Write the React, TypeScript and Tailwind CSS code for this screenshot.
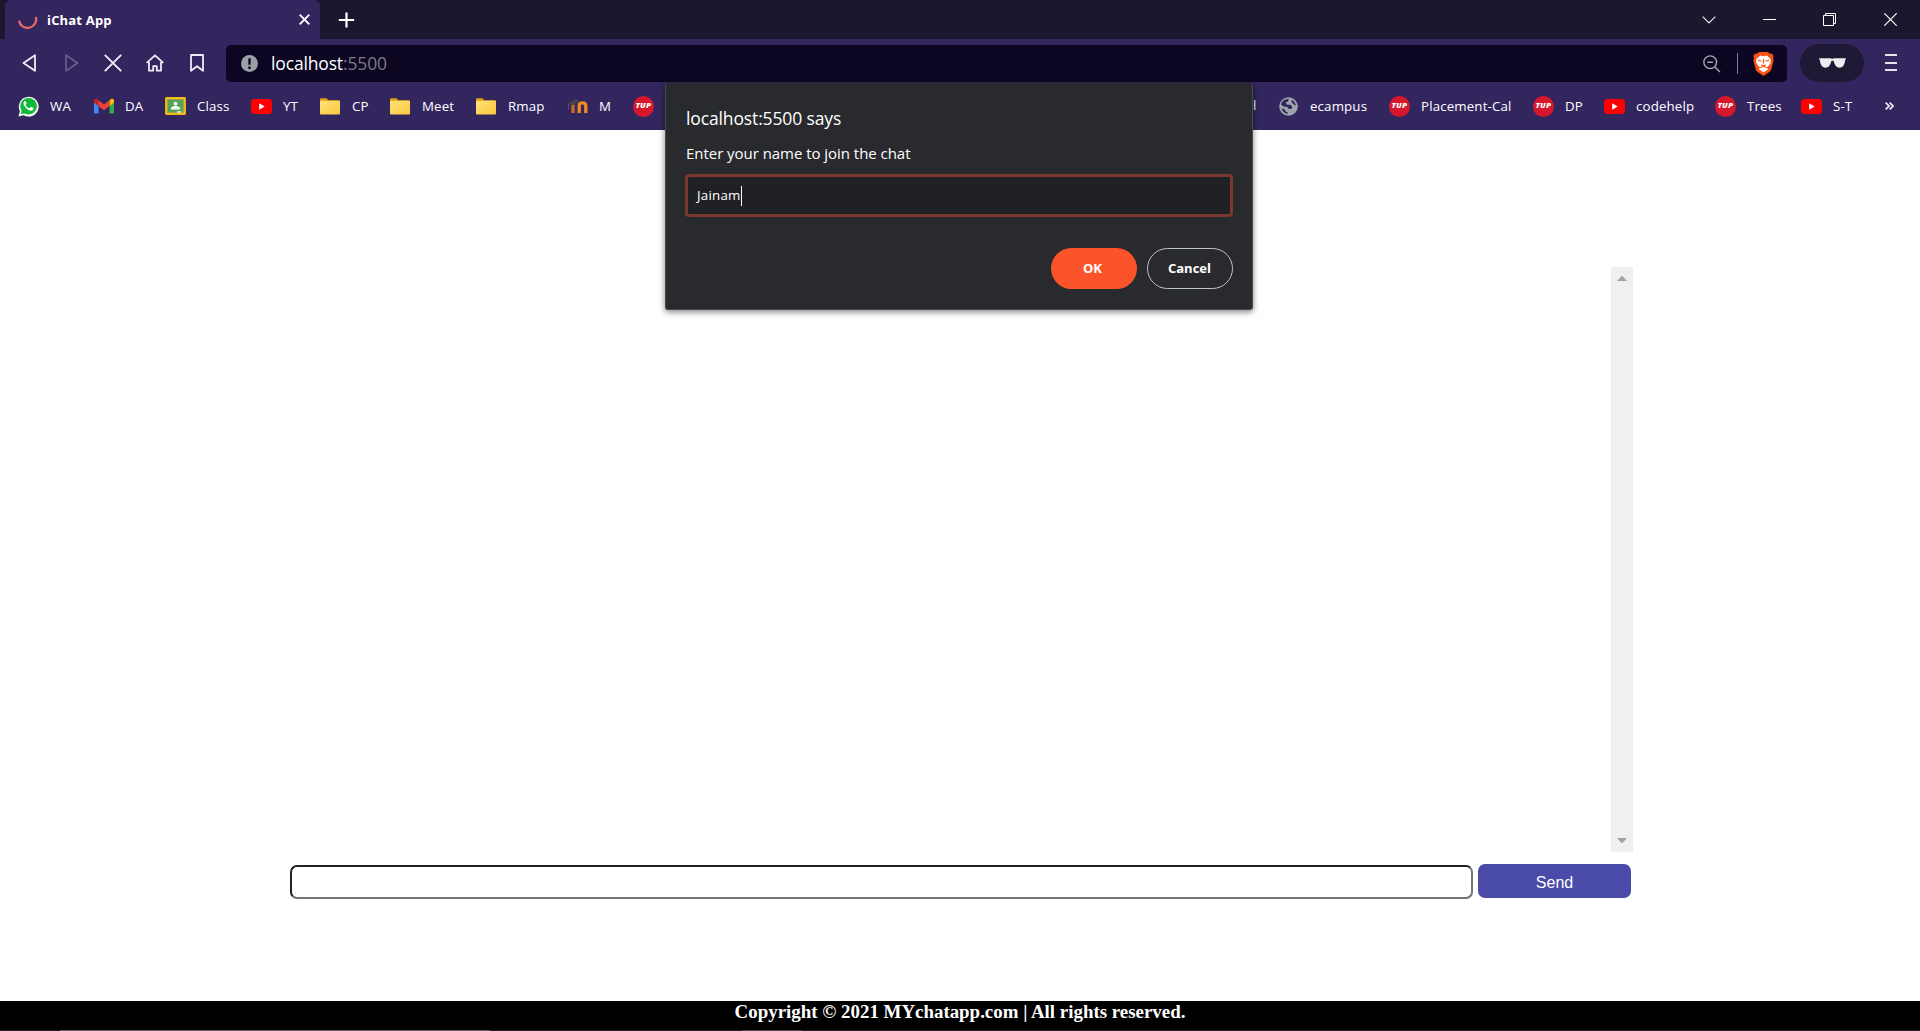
import React from "react";

const ui = "font-['Open_Sans','Noto_Sans',sans-serif]";

function WhatsApp() {
  return (
    <svg className="shrink-0" width="21" height="21" viewBox="0 0 22 22">
      <path d="M0.4 21.4 L2 16 A10.4 10.4 0 1 1 6 20.2 Z" fill="#f4f4f4" />
      <circle cx="11.1" cy="10.7" r="8.7" fill="#10b83c" />
      <path d="M3 18.8 L4 14 L8 18 Z" fill="#10b83c" />
      <path
        d="M8.2 5.7c-.3-.6-1-.6-1.5-.1-1 1-1.2 2.300-.5 3.900 1.300 2.800 3.600 4.900 6.400 5.800 1.700.500 3.300-.3 3.600-1.900.1-.5 0-.8-.4-1l-2-.9c-.4-.2-.7-.1-.9.2l-.7.9c-.2.3-.5.3-.8.2-1.500-.7-2.700-1.800-3.400-3.100-.2-.3-.1-.5.1-.8l.6-.8c.2-.3.2-.5.1-.7z"
        fill="#fff"
      />
    </svg>
  );
}

function Gmail() {
  return (
    <svg width="20" height="16" viewBox="0 0 20 16">
      <path d="M0 3h4.500v12.500H1.300A1.300 1.300 0 0 1 0 14.200z" fill="#4285f4" />
      <path d="M15.500 3H20v11.200a1.300 1.300 0 0 1-1.300 1.300h-3.200z" fill="#34a853" />
      <path d="M15.500 2.200L17 1c1.300-.9 3 0 3 1.500v2.100l-4.500 3.500z" fill="#fbbc04" />
      <path d="M4.500 8.100V2.200L10 6.400l5.500-4.200v5.900L10 12.300z" fill="#ea4335" />
      <path d="M0 2.500C0 1 1.700.1 3 1l1.500 1.200v5.900L0 4.600z" fill="#c5221f" />
    </svg>
  );
}

function Classroom() {
  return (
    <svg className="shrink-0" width="21" height="18" viewBox="0 0 22 19">
      <rect width="22" height="19" rx="1.500" fill="#f5ba15" />
      <rect x="2.500" y="2.500" width="17" height="14" fill="#57a15b" />
      <circle cx="11" cy="7" r="2" fill="#fff" />
      <path d="M6 13.300c0-3 2.500-3.800 5-3.800s5 .8 5 3.800z" fill="#f5fff5" />
      <rect x="12.500" y="15" width="4.500" height="1.600" fill="#e8f0e8" />
    </svg>
  );
}

function YouTube() {
  return (
    <svg width="21" height="15" viewBox="0 0 21 15">
      <rect width="21" height="15" rx="3.500" fill="#f00" />
      <path d="M8.200 4.300v6.400l5.500-3.200z" fill="#fff" />
    </svg>
  );
}

function Folder() {
  return (
    <svg className="-ml-px" width="20" height="17" viewBox="0 0 20 17">
      <defs>
        <linearGradient id="folder" x1="0" y1="0" x2="1" y2="1">
          <stop offset="0" stopColor="#ffe17c" />
          <stop offset="1" stopColor="#fbc93c" />
        </linearGradient>
      </defs>
      <path d="M0 1.200Q0 .3 1 .3h5.500l1.800 1.900H19q1 0 1 1V9H0z" fill="#e0a010" />
      <rect y="2.700" width="20" height="13.800" rx="1" fill="url(#folder)" />
    </svg>
  );
}

function Moodle() {
  return (
    <svg className="shrink-0" width="21" height="15" viewBox="0 0 21 15">
      <path d="M6 14V5.500" fill="none" stroke="#c4682a" strokeWidth="3.400" />
      <path d="M12.200 14V6.800q0-3 3.300-3t3.300 3V14" fill="none" stroke="#f08a22" strokeWidth="3.300" />
      <path d="M0 5L7 1l5-.6L10.500 4 5 6z" fill="#46424e" />
      <path d="M1.500 5v5.500" stroke="#6a5560" strokeWidth=".8" />
    </svg>
  );
}

function Tup() {
  return (
    <span className="flex h-[21px] w-[21px] items-center justify-center rounded-full bg-[#d6182c]">
      <span className="inline-block scale-x-[1.25] text-[6.500px] leading-none font-extrabold text-white italic">TUP</span>
    </span>
  );
}

function Globe() {
  return (
    <svg width="19" height="19" viewBox="0 0 19 19">
      <circle cx="9.500" cy="9.500" r="9.300" fill="#9fa5ac" />
      <path d="M2 7.500C3 4 6 1.800 9.800 2L9 4.500 6.500 5.500l1.700 2.300 3.500 0 1.800 2.400-1.200 1.800-2.800-.3L8.300 10 4.800 9.500z" fill="#33265f" />
      <path d="M12.500 2.800c2.500 1.200 4.200 3.500 4.400 6l-1.800-1-2.500-2.600z" fill="#33265f" />
      <path d="M2.500 11.300l3.300 1.200 1.200 2.500 2 .5-.5 1.500C5.500 16.500 3.200 14.300 2.500 11.300z" fill="#33265f" />
    </svg>
  );
}

function Bookmark({ icon, label, width }: { icon: React.ReactNode; label: string; width: string }) {
  return (
    <div className={`flex shrink-0 items-center ${width}`}>
      <span className="mr-[11px] flex w-[21px] shrink-0 items-center justify-center">{icon}</span>
      <span className="pt-px whitespace-nowrap">{label}</span>
    </div>
  );
}

function TabStrip() {
  return (
    <div className="flex h-[39px] bg-[#1b172e] pl-[5px]">
      <div className="flex w-[315px] items-center rounded-t-[6px] bg-[#33265f] pl-[13px]">
        <svg width="20" height="20" viewBox="0 0 20 20" className="mt-[2px]">
          <path d="M1 8.500A8.600 8.600 0 1 0 17.800 5" transform="translate(0,1)" fill="none" stroke="#ec6a64" strokeWidth="2.200" />
        </svg>
        <span className="mt-[2px] ml-[9px] text-[13px] font-bold tracking-[0.18px] text-white">iChat App</span>
        <svg className="mr-[10px] ml-auto" width="11" height="11" viewBox="0 0 11 11" stroke="#fff" strokeWidth="1.900">
          <path d="M.7 .7L10.300 10.300M10.300 .7L.7 10.300" />
        </svg>
      </div>
      <svg className="mt-[12px] ml-[18px]" width="17" height="17" viewBox="0 0 17 17" stroke="#fff" strokeWidth="2.200">
        <path d="M8.500 .5v15M.8 8h15.400" />
      </svg>
      <div className="mt-[13px] ml-auto flex h-[13px] items-center">
        <svg width="14" height="8" viewBox="0 0 14 8" fill="none" stroke="#eee" strokeWidth="1.100">
          <path d="M.7 .7L7 7 13.300 .7" />
        </svg>
        <span className="ml-[47px] h-px w-[13px] bg-white" />
        <svg className="ml-[47px]" width="13" height="13" viewBox="0 0 13 13" fill="none" stroke="#fff">
          <path d="M.5 2.500h10v10h-10zM2.500 2.500v-2h10v10h-2" />
        </svg>
        <svg className="mr-[23px] ml-[48px]" width="13" height="13" viewBox="0 0 13 13" stroke="#fff" strokeWidth="1.200">
          <path d="M.3 .3l12.400 12.400M12.700 .3L.3 12.700" />
        </svg>
      </div>
    </div>
  );
}

function Toolbar() {
  return (
    <div className="flex h-[48px] items-start bg-[#33265f] pt-[6px]">
      <div className="flex h-[36px] w-[226px] items-center pl-[22px] text-[#eeecf5]">
        <svg width="15" height="18" viewBox="0 0 15 18" fill="none" stroke="currentColor" strokeWidth="1.800" strokeLinejoin="round">
          <path d="M13 1.200v15.600L1.500 9z" />
        </svg>
        <svg className="ml-[27px] text-[#6b6092]" width="15" height="18" viewBox="0 0 15 18" fill="none" stroke="currentColor" strokeWidth="1.600" strokeLinejoin="round">
          <path d="M2 1.200v15.600L13.500 9z" />
        </svg>
        <svg className="ml-[25px]" width="18" height="18" viewBox="0 0 18 18" stroke="currentColor" strokeWidth="1.900">
          <path d="M.8 .8l16.400 16.400M17.200 .8L.8 17.200" />
        </svg>
        <svg className="ml-[24px]" width="18" height="18" viewBox="0 0 18 18" fill="none" stroke="currentColor" strokeWidth="1.800" strokeLinejoin="round">
          <path d="M.7 8.800L9 1.300l8.300 7.500M3 8v8.700h4.200v-4.500h3.600v4.500H15V8" />
        </svg>
        <svg className="ml-[26px]" width="14" height="18" viewBox="0 0 14 18" fill="none" stroke="currentColor" strokeWidth="1.800" strokeLinejoin="round">
          <path d="M1 1h12v15.800l-6-4.600-6 4.600z" />
        </svg>
      </div>
      <div className="flex h-[37px] w-[1561px] items-center rounded-[5px] bg-[#0c0622] pl-[15px]">
        <svg width="17" height="17" viewBox="0 0 17 17">
          <circle cx="8.500" cy="8.500" r="8.500" fill="#9aa0a6" />
          <path d="M8.500 3.300v6.500M8.500 11.500v2.400" stroke="#0c0622" strokeWidth="2.300" />
        </svg>
        <span className="ml-[13px] text-[17.500px] tracking-[-0.15px] text-white">
          localhost<span className="text-[#7d7a89]">:5500</span>
        </span>
        <svg className="ml-auto" width="18" height="18" viewBox="0 0 19 19" fill="none" stroke="#a5a3af" strokeWidth="1.500">
          <path d="M4.500 7.700h6M12.600 12.600l5.300 5.300" />
          <circle cx="7.600" cy="7.600" r="6.700" />
        </svg>
        <span className="ml-[16px] h-[21px] w-px bg-[#807e8d]" />
        <svg className="mr-[13px] ml-[15px]" width="21" height="24" viewBox="0 0 21 24">
          <path d="M6 0h9l1.800 1.800 2-.2L20.700 4 20 6l.7 2.200-2.500 9.300q-.3 1.300-1.500 2.200L10.500 24 4.300 19.700q-1.200-.9-1.500-2.200L.3 8.200 1 6 .3 4l1.900-2.400 2 .2z" fill="#fb5012" />
          <path d="M10.500 4.300l3.200-.8 3.500 3 .8 1.800-.8 3.700-3.400 3.700 1.500 1.500-4.800 3.400-4.800-3.400 1.500-1.500L3.800 12 3 8.300l.8-1.800 3.500-3z" fill="#fff" />
          <path d="M4.800 8l3.800 1.200M16.200 8l-3.800 1.200M10.500 7v4.500M8.300 12.800l2.200 1.300 2.200-1.300M7 15.800l3.500-1.500 3.500 1.500" fill="none" stroke="#fb5012" strokeWidth="1.200" />
        </svg>
      </div>
      <div className="-mt-px ml-[13px] flex h-[38px] w-[64px] items-center justify-center rounded-full bg-[#1e1935]">
        <svg width="27" height="10" viewBox="0 0 27 10" fill="#eeeef0">
          <path d="M0 .3h11.200q2.300 .7 4.600 0H27l-.8 2q-.8 6.900-5.200 7.400-4.800.3-6.200-6.200l-.5-.8h-1.600l-.5.800q-1.400 6.500-6.200 6.200Q1.600 9.200.8 2.300z" />
        </svg>
      </div>
      <div className="mt-[9px] ml-[21px] flex h-[17px] w-[12px] flex-col justify-between">
        <span className="h-[2px] bg-[#e6e3ef]" />
        <span className="h-[2px] bg-[#e6e3ef]" />
        <span className="h-[2px] bg-[#e6e3ef]" />
      </div>
    </div>
  );
}

function BookmarksBar() {
  return (
    <div className="flex h-[43px] items-center bg-[#33265f] pb-[5px] pl-[18px] text-[13.300px] tracking-[0.14px] text-white">
      <Bookmark icon={<WhatsApp />} label="WA" width="w-[75px]" />
      <Bookmark icon={<Gmail />} label="DA" width="w-[72px]" />
      <Bookmark icon={<Classroom />} label="Class" width="w-[86px]" />
      <Bookmark icon={<YouTube />} label="YT" width="w-[69px]" />
      <Bookmark icon={<Folder />} label="CP" width="w-[70px]" />
      <Bookmark icon={<Folder />} label="Meet" width="w-[86px]" />
      <Bookmark icon={<Folder />} label="Rmap" width="w-[91px]" />
      <Bookmark icon={<Moodle />} label="M" width="w-[66px]" />
      <Bookmark icon={<Tup />} label=":" width="w-[620px]" />
      <span className="w-[25px]">l</span>
      <Bookmark icon={<Globe />} label="ecampus" width="w-[111px]" />
      <Bookmark icon={<Tup />} label="Placement-Cal" width="w-[144px]" />
      <Bookmark icon={<Tup />} label="DP" width="w-[71px]" />
      <Bookmark icon={<YouTube />} label="codehelp" width="w-[111px]" />
      <Bookmark icon={<Tup />} label="Trees" width="w-[86px]" />
      <Bookmark icon={<YouTube />} label="S-T" width="w-[84px]" />
      <svg width="9" height="8" viewBox="0 0 9 8" fill="none" stroke="#f2f0f8" strokeWidth="1.700">
        <path d="M.7 .6L4 4 .7 7.400M4.700 .6L8 4 4.700 7.400" />
      </svg>
    </div>
  );
}

function PromptDialog() {
  return (
    <div className="absolute top-[83px] left-[665px] h-[227px] w-[588px] rounded-[3px] border border-t-0 border-[#4a4b4e] bg-[#292a2d] px-[20px] text-white shadow-[0_2px_6px_rgba(0,0,0,0.5)]">
      <div className="mt-[23px] h-[24px] text-[17.500px] leading-[24px] tracking-[-0.13px]">localhost:5500 says</div>
      <div className="mt-[13px] h-[20px] text-[15px] leading-[20px] tracking-[-0.04px]">Enter your name to join the chat</div>
      <div className="-ml-px mt-[11px] flex h-[43px] w-[548px] items-center rounded-[4px] border-[3px] border-[#7b382c] bg-[#202124] pl-[9px] text-[13.300px] tracking-[0.25px]">
        <span className="pt-px">Jainam</span>
        <span className="h-[20px] w-px bg-white" />
      </div>
      <div className="mt-[31px] -mr-px flex justify-end gap-[10px] text-[13px] font-bold">
        <div className="flex h-[41px] w-[86px] items-center justify-center rounded-full bg-[#fb542b] pr-[3px]">OK</div>
        <div className="flex h-[41px] w-[86px] items-center justify-center rounded-full border border-[#c2c3d0] pr-px">Cancel</div>
      </div>
    </div>
  );
}

function ChatPage() {
  return (
    <div className="flex h-[901px] flex-col bg-white pt-[137px]">
      <div className="ml-[290px] flex h-[585px] w-[1343px] justify-end">
        <div className="flex w-[22px] flex-col items-center justify-between bg-[#f0f0f0] py-[9px]">
          <svg width="10" height="5" viewBox="0 0 10 5" fill="#a3a3a3">
            <path d="M0 5L4.500 0h1L10 5z" />
          </svg>
          <svg width="10" height="5" viewBox="0 0 10 5" fill="#a3a3a3">
            <path d="M0 0L4.500 5h1L10 0z" />
          </svg>
        </div>
      </div>
      <div className="mt-[12px] ml-[290px] flex gap-[5px]">
        <div className="mt-px h-[34px] w-[1183px] rounded-[7px] border-2 border-[#757575] border-t-[#212121] border-l-[#212121]" />
        <div className="flex h-[34px] w-[153px] items-center justify-center rounded-[7px] bg-[#4a4aa8] pt-[3px] font-['Liberation_Sans',Arial,sans-serif] text-[16px] text-white">
          Send
        </div>
      </div>
      <div className="mt-auto h-[30px] bg-black">
        <div className="h-[29px] text-center font-['Liberation_Serif',serif] text-[18.900px] leading-[22px] font-bold text-white">
          Copyright © 2021 MYchatapp.com | All rights reserved.
        </div>
        <div className="flex h-px bg-[#221f21]">
          <span className="ml-[60px] w-[430px] bg-[#666]" />
          <span className="ml-[252px] w-[60px] bg-[#4a4a4a]" />
        </div>
      </div>
    </div>
  );
}

export default function App() {
  return (
    <div className={`relative h-[1031px] w-[1920px] overflow-hidden bg-white ${ui}`}>
      <TabStrip />
      <Toolbar />
      <BookmarksBar />
      <ChatPage />
      <PromptDialog />
    </div>
  );
}
